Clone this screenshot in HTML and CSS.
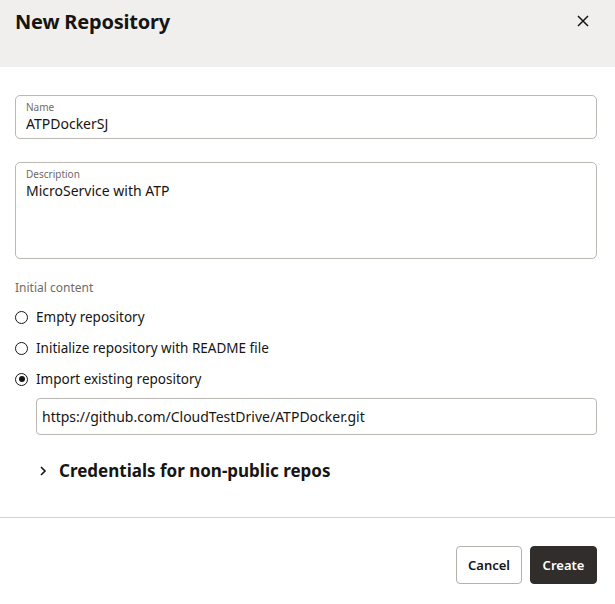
FILE: index.html
```html
<!DOCTYPE html>
<html>
<head>
<meta charset="utf-8">
<link rel="stylesheet" href="styles.css">
</head>
<body>
<div class="dialog">
  <div class="header">
    <h1 class="title">New Repository</h1>
    <button class="close" aria-label="Close">
      <svg width="12" height="12" viewBox="0 0 12 12"><path d="M1 1 L11 11 M11 1 L1 11" stroke="#161513" stroke-width="1.5" fill="none"/></svg>
    </button>
  </div>
  <div class="content">
    <div class="field">
      <div class="field-label">Name</div>
      <div class="field-value">ATPDockerSJ</div>
    </div>
    <div class="field textarea">
      <div class="field-label">Description</div>
      <div class="field-value">MicroService with ATP</div>
    </div>
    <div class="group-label">Initial content</div>
    <div class="radios">
      <div class="radio-row"><span class="radio"></span><span class="radio-text">Empty repository</span></div>
      <div class="radio-row"><span class="radio"></span><span class="radio-text">Initialize repository with README file</span></div>
      <div class="radio-row"><span class="radio checked"></span><span class="radio-text">Import existing repository</span></div>
    </div>
    <div class="url-input">https://github.com/CloudTestDrive/ATPDocker.git</div>
    <div class="cred">
      <svg class="chev" width="8" height="12" viewBox="0 0 8 12"><path d="M2 2 L6 6 L2 10" stroke="#161513" stroke-width="1.6" fill="none"/></svg>
      <span class="cred-text">Credentials for non-public repos</span>
    </div>
  </div>
  <div class="footer">
    <button class="btn">Cancel</button>
    <button class="btn primary">Create</button>
  </div>
</div>
</body>
</html>
```
FILE: styles.css
```css
html, body {
  margin: 0;
  padding: 0;
  background: #ffffff;
}
body {
  font-family: "Noto Sans", "Liberation Sans", sans-serif;
  color: #161513;
  width: 615px;
  height: 604px;
  overflow: hidden;
}
.dialog {
  width: 615px;
}
.header {
  height: 67px;
  background: #f1efed;
  display: flex;
  justify-content: space-between;
  align-items: flex-start;
  padding: 0 26px 0 15px;
  box-sizing: border-box;
}
.title {
  margin: 8px 0 0 0;
  font-size: 20px;
  font-weight: 700;
  line-height: 28px;
  letter-spacing: -0.2px;
}
.close {
  margin-top: 15px;
  border: 0;
  background: none;
  padding: 0;
  width: 12px;
  height: 12px;
  display: flex;
}
.content {
  padding: 28px 18px 0 15px;
}
.field {
  height: 44px;
  box-sizing: border-box;
  border: 1px solid #bcb8b4;
  border-radius: 5px;
  padding: 4px 10px 0 10px;
}
.field.textarea {
  margin-top: 23px;
  height: 97px;
}
.field-label {
  font-size: 10px;
  line-height: 14px;
  color: #6f6b67;
}
.field-value {
  font-size: 14px;
  line-height: 20px;
  margin-top: 0px;
}
.group-label {
  margin-top: 20px;
  font-size: 12px;
  line-height: 18px;
  color: #6f6b67;
}
.radios {
  margin-top: 10px;
  display: flex;
  flex-direction: column;
  gap: 11px;
}
.radio-row {
  display: flex;
  align-items: center;
  height: 20px;
  gap: 8px;
}
.radio {
  width: 13px;
  height: 13px;
  box-sizing: border-box;
  border: 1.3px solid #161513;
  border-radius: 50%;
  display: flex;
  align-items: center;
  justify-content: center;
  flex: none;
}
.radio.checked::after {
  content: "";
  width: 6px;
  height: 6px;
  border-radius: 50%;
  background: #161513;
}
.radio-text {
  font-size: 13.5px;
  line-height: 20px;
}
.url-input {
  margin: 9px 0 0 21px;
  height: 37px;
  box-sizing: border-box;
  border: 1px solid #bcb8b4;
  border-radius: 4px;
  padding: 0 5px;
  font-size: 14px;
  line-height: 35px;
}
.cred {
  margin: 25px 0 0 24px;
  display: flex;
  align-items: center;
  gap: 12px;
  height: 22px;
}
.cred-text {
  font-size: 17px;
  font-weight: 700;
  line-height: 22px;
}
.footer {
  margin-top: 35px;
  border-top: 1px solid #d6d3cf;
  display: flex;
  justify-content: flex-end;
  gap: 8px;
  padding: 28px 18px 0 0;
}
.btn {
  height: 38px;
  width: 66px;
  border: 1px solid #b5b1ad;
  border-radius: 4px;
  background: #ffffff;
  font-family: "Noto Sans", "Liberation Sans", sans-serif;
  font-size: 13px;
  font-weight: 600;
  color: #161513;
  padding: 0;
}
.btn.primary {
  width: 67px;
  background: #312d2a;
  border-color: #312d2a;
  color: #ffffff;
}
```
